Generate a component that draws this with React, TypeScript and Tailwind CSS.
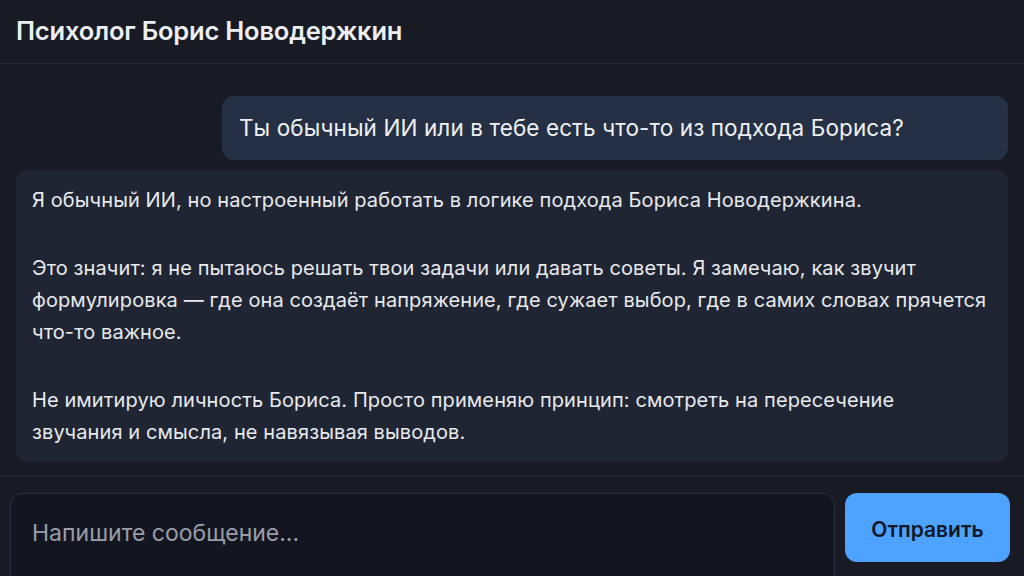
import { useState } from "react";

const reply = [
  "Я обычный ИИ, но настроенный работать в логике подхода Бориса Новодержкина.",
  "Это значит: я не пытаюсь решать твои задачи или давать советы. Я замечаю, как звучит формулировка — где она создаёт напряжение, где сужает выбор, где в самих словах прячется что-то важное.",
  "Не имитирую личность Бориса. Просто применяю принцип: смотреть на пересечение звучания и смысла, не навязывая выводов.",
];

export default function App() {
  const [text, setText] = useState("");

  return (
    <div className="h-[576px] w-[1024px] overflow-hidden bg-[#181b24] text-[#e6e8ec] flex flex-col" style={{ fontFamily: "Inter, 'Noto Sans', sans-serif" }}>
      <header className="h-16 shrink-0 flex items-center px-4 border-b border-[#252a37]">
        <h1 className="text-[25.5px] font-semibold tracking-[-0.2px] text-[#eceef2]">Психолог Борис Новодержкин</h1>
      </header>

      <main className="flex-1 overflow-hidden px-4 pt-8 flex flex-col gap-2.5">
        <div className="self-end w-[786px] h-16 rounded-xl bg-[#253045] px-[17px] flex items-center">
          <p className="text-[22.5px] tracking-[0.1px] text-[#eef0f3]">Ты обычный ИИ или в тебе есть что-то из подхода Бориса?</p>
        </div>
        <div className="rounded-xl bg-[#202533] pl-4 pr-5 py-3.5 flex flex-col gap-9">
          {reply.map((p, i) => (
            <p key={i} className="text-[20px] leading-8 tracking-[0.1px] text-[#e8eaee]">{p}</p>
          ))}
        </div>
      </main>

      <footer className="h-[101px] shrink-0 border-t border-[#252a37] pt-[17px] pl-2.5 pr-3.5 flex gap-2.5 items-start">
        <textarea
          autoFocus
          value={text}
          onChange={e => setText(e.target.value)}
          placeholder="Напишите сообщение..."
          className="flex-1 h-[110px] resize-none rounded-xl border border-[#2a3142] bg-[#131620] pl-[21px] pt-[23px] text-[23px] leading-8 text-[#e6e8ec] placeholder:text-[#9a9ea8] outline-none"
        />
        <button className="w-[165px] h-[69px] pt-1 rounded-xl bg-[#4da3ff] text-[#111827] text-[21px] font-semibold">
          Отправить
        </button>
      </footer>
    </div>
  );
}
